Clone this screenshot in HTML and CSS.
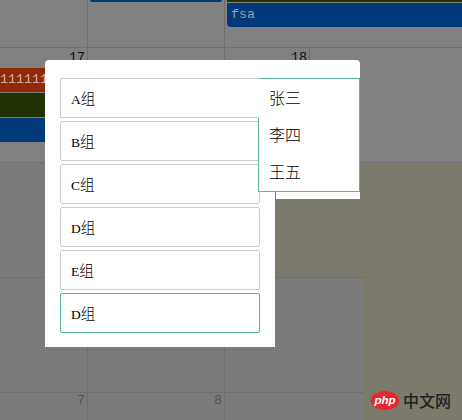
FILE: index.html
```html
<!DOCTYPE html>
<html lang="zh">
<head>
<meta charset="utf-8">
<title>分组</title>
<link rel="stylesheet" href="styles.css">
</head>
<body>
<div class="calendar">
  <div class="lower"></div>
  <div class="line h" style="top:47px"></div>
  <div class="line h" style="top:162px"></div>
  <div class="line h" style="top:277px"></div>
  <div class="line h" style="top:392px"></div>
  <div class="line v" style="left:87px"></div>
  <div class="line v" style="left:224px"></div>
  <div class="line stub"></div>
  <div class="today"></div>
  <div class="today-side"></div>
  <div class="event top-blue"></div>
  <div class="event top-green"></div>
  <div class="event fsa">fsa</div>
  <div class="event red">1111111</div>
  <div class="event green"></div>
  <div class="event blue"></div>
  <span class="day d17">17</span>
  <span class="day d18">18</span>
  <span class="day d7">7</span>
  <span class="day d8">8</span>
</div>
<div class="modal">
  <ul class="groups">
    <li class="group open"><span class="letter">A</span>组</li>
    <li class="group"><span class="letter">B</span>组</li>
    <li class="group"><span class="letter">C</span>组</li>
    <li class="group"><span class="letter">D</span>组</li>
    <li class="group"><span class="letter">E</span>组</li>
    <li class="group active"><span class="letter">D</span>组</li>
  </ul>
  <ul class="members">
    <li>张三</li>
    <li>李四</li>
    <li>王五</li>
  </ul>
</div>
<div class="watermark">
  <svg class="php-logo" width="28" height="19" viewBox="0 0 28 19"><ellipse cx="14" cy="9.5" rx="14" ry="9.5" fill="#e8262c"/><text x="14" y="12.5" text-anchor="middle" class="php-text">php</text></svg>
  <span class="cn">中文网</span>
</div>
</body>
</html>
```
FILE: styles.css
```css
* { box-sizing: border-box; }
html, body { margin: 0; padding: 0; }
body { width: 462px; height: 420px; overflow: hidden; position: relative; background: #808080; font-family: "Noto Sans CJK SC", sans-serif; }
ul { list-style: none; margin: 0; padding: 0; }

.calendar { position: absolute; inset: 0; background: #818181; }
.lower { position: absolute; left: 0; right: 0; top: 163px; bottom: 0; background: #7b7b7c; }
.line { position: absolute; background: #707070; }
.line.h { left: 0; right: 0; height: 1px; }
.line.v { top: 0; bottom: 0; width: 1px; }
.line.stub { left: 309px; top: 47px; width: 1px; height: 14px; }
.today { position: absolute; left: 364px; top: 163px; right: 0; bottom: 0; background: #7b7a6d; }
.today-side { position: absolute; left: 275px; top: 163px; width: 89px; height: 114px; background: #7b7a6d; }
.event { position: absolute; font: 13.33px/24px "Liberation Mono", monospace; white-space: nowrap; }
.top-blue { left: 90px; top: 0; width: 132px; height: 2px; background: #02397a; border-radius: 0 0 3px 3px; }
.top-green { left: 227px; top: 0; right: 0; height: 2px; background: #233300; }
.fsa { left: 227px; top: 3px; right: 0; height: 24px; padding-left: 4px; background: #02397a; border-radius: 0 0 0 4px; color: #8c9fb6; }
.red { left: 0; top: 68px; width: 87px; height: 24px; background: #90280a; color: #d2b0a0; }
.green { left: 0; top: 93px; width: 87px; height: 24px; background: #213200; }
.blue { left: 0; top: 118px; width: 87px; height: 24px; background: #02397a; }
.day { position: absolute; font: 13.33px/16px "Liberation Mono", monospace; color: #111; }
.d17 { left: 69px; top: 50px; }
.d18 { left: 291px; top: 50px; }
.d7 { left: 77px; top: 393px; color: #555; }
.d8 { left: 214px; top: 393px; color: #555; }

.modal { position: absolute; left: 45px; top: 60px; width: 230px; height: 287px; padding: 18px 15px; background: #fff; border-radius: 4px 4px 0 0; }
.groups { display: flex; flex-direction: column; gap: 3px; }
.group { height: 40px; padding-left: 10px; border: 1px solid #ccc; border-radius: 2px; font-size: 14.5px; font-weight: 300; line-height: 38px; color: #000; }
.group.active { border-color: #4cb887; }
.group.open { position: relative; z-index: 2; width: 199px; border-right-color: #fff; border-radius: 2px 0 0 2px; }
.letter { font: 13.5px "Liberation Serif", serif; }
.members { position: absolute; z-index: 1; left: 213px; top: 18px; width: 102px; height: 114px; padding-left: 10px; background: #fff; border: 1px solid #5cb88f; }
.members::after { content: ""; position: absolute; left: -1px; right: -1px; top: -19px; height: 18px; background: #fff; border-radius: 0 4px 0 0; }
.members::before { content: ""; position: absolute; left: 17px; right: -1px; bottom: -8px; height: 7px; background: #fff; }
.members li { height: 37px; font-size: 16px; font-weight: 300; line-height: 37px; color: #000; }

.watermark { position: absolute; left: 371px; top: 391px; display: flex; align-items: center; gap: 4px; }
.php-logo { display: block; }
.php-text { font: italic bold 11.5px "Liberation Sans", sans-serif; fill: #fff; }
.cn { font-size: 16px; font-weight: 500; line-height: 19px; color: #222; }
```
